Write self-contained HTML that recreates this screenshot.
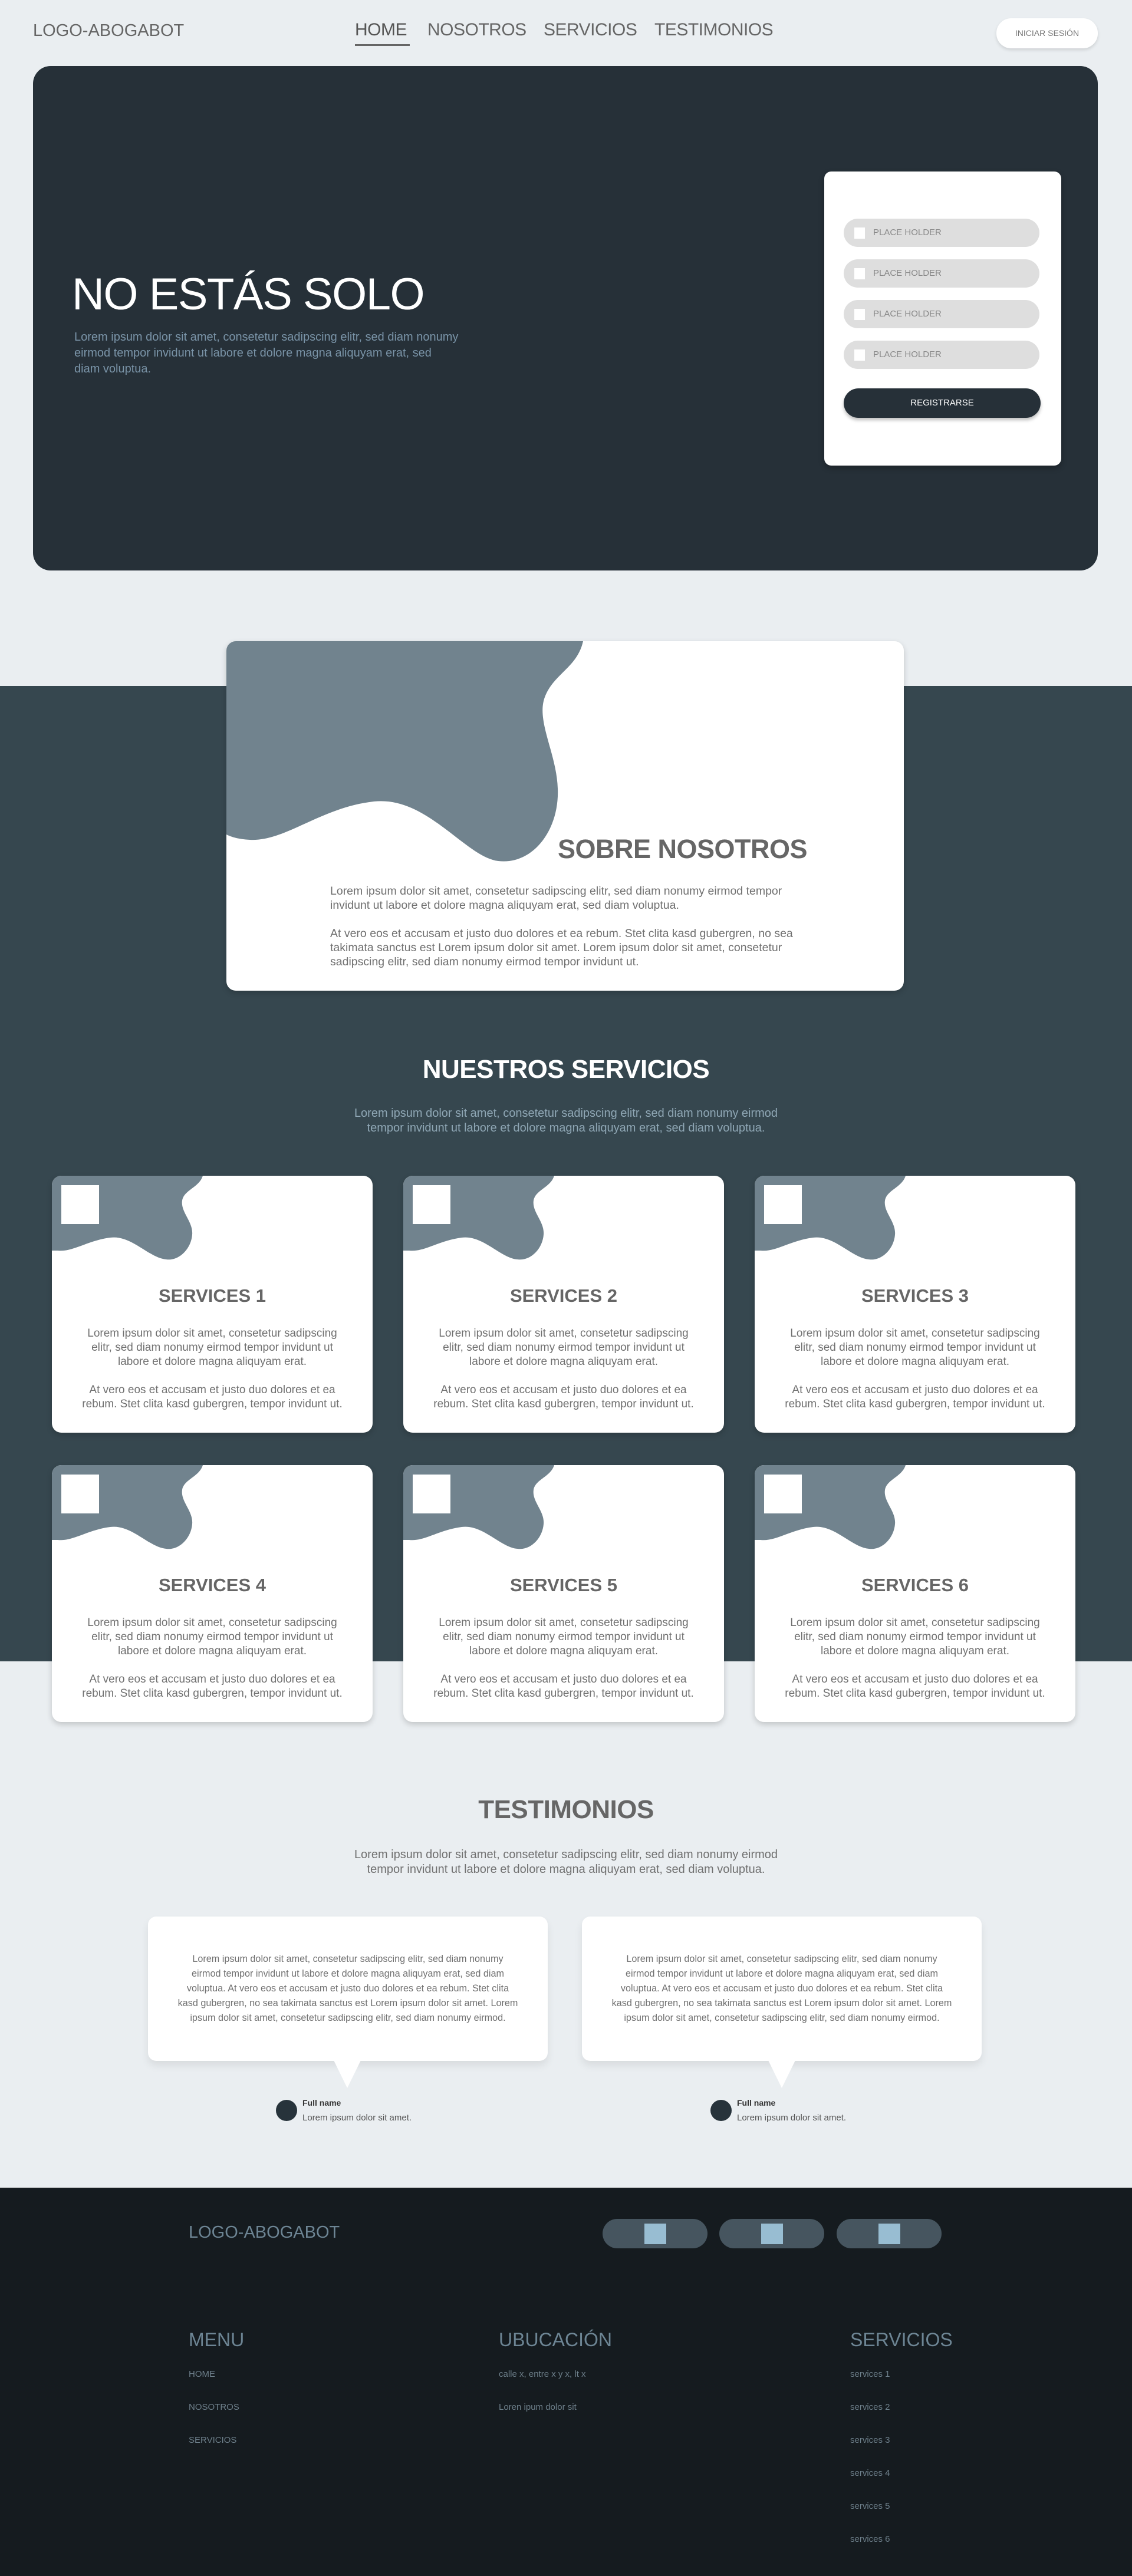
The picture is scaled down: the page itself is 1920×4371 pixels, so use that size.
<!DOCTYPE html>
<html><head><meta charset="utf-8"><style>
*{margin:0;padding:0;box-sizing:border-box}
body{width:1920px;height:4371px;background:#eaeef1;font-family:"Liberation Sans",sans-serif;position:relative;overflow:hidden}
.a{position:absolute}
.nav{font-size:30px;color:#666;top:34px;letter-spacing:-0.5px}
.card{background:#fff;border-radius:16px;overflow:hidden;box-shadow:0 4px 10px rgba(0,0,0,.18)}
.inp{left:33px;width:332px;height:48px;border-radius:24px;background:#dedede;font-size:15px;color:#888;line-height:48px;padding-left:50px}
.inp:before{content:"";position:absolute;left:18px;top:15px;width:18px;height:19px;background:#fff}
.svc .t{position:absolute;left:0;width:100%;top:186px;text-align:center;font-size:31px;font-weight:bold;color:#666}
.svc .p{position:absolute;left:0;width:100%;top:256px;text-align:center;font-size:19px;line-height:24px;color:#707070}
.tc{background:#fff;border-radius:14px;box-shadow:0 8px 14px rgba(0,0,0,.08);width:678px;height:245px;top:3252px}
.tc p{position:absolute;left:0;width:100%;top:60px;text-align:center;font-size:16.2px;line-height:25px;color:#707070}
.tail{top:3496px;width:0;height:0;border-left:23px solid transparent;border-right:23px solid transparent;border-top:47px solid #fff}
.av{top:3563px;width:36px;height:36px;border-radius:50%;background:#27333b}
.fn{font-size:14px;font-weight:bold;color:#333}
.fl{font-size:15px;color:#555}
.fh{top:3952px;font-size:32px;color:#6d8594}
.lk{font-size:15px;color:#6d7f8a}
.pill{top:3765px;width:178px;height:50px;border-radius:25px;background:#46555f}
.pill:after{content:"";position:absolute;left:71px;top:8px;width:37px;height:35px;background:#98bdd2}
</style></head><body>
<div class="a" style="left:56px;top:36px;font-size:29px;color:#666">LOGO-ABOGABOT</div>
<div class="a nav" style="left:602px;color:#555">HOME</div>
<div class="a" style="left:602px;top:75px;width:93px;height:3px;background:#666"></div>
<div class="a nav" style="left:725px">NOSOTROS</div>
<div class="a nav" style="left:922px">SERVICIOS</div>
<div class="a nav" style="left:1110px">TESTIMONIOS</div>
<div class="a" style="left:1690px;top:31px;width:172px;height:51px;border-radius:25px;background:#fff;box-shadow:0 3px 6px rgba(0,0,0,.12);font-size:14px;color:#777;text-align:center;line-height:51px">INICIAR SESIÓN</div>

<div class="a" style="left:56px;top:112px;width:1806px;height:856px;background:#263038;border-radius:30px"></div>
<div class="a" style="left:122px;top:456px;font-size:76px;color:#fff;letter-spacing:-1.5px;font-weight:300">NO ESTÁS SOLO</div>
<div class="a" style="left:126px;top:559px;width:720px;font-size:20px;line-height:27px;color:#7a94a8">Lorem ipsum dolor sit amet, consetetur sadipscing elitr, sed diam nonumy<br>eirmod tempor invidunt ut labore et dolore magna aliquyam erat, sed<br>diam voluptua.</div>
<div class="a" style="left:1398px;top:291px;width:402px;height:499px;background:#fff;border-radius:12px;box-shadow:0 4px 10px rgba(0,0,0,.3)">
 <div class="a inp" style="top:80px">PLACE HOLDER</div>
 <div class="a inp" style="top:149px">PLACE HOLDER</div>
 <div class="a inp" style="top:218px">PLACE HOLDER</div>
 <div class="a inp" style="top:287px">PLACE HOLDER</div>
 <div class="a" style="left:33px;top:368px;width:334px;height:50px;border-radius:25px;background:#263038;color:#fff;font-size:15px;text-align:center;line-height:50px;box-shadow:0 4px 6px rgba(0,0,0,.25)">REGISTRARSE</div>
</div>

<div class="a" style="left:0;top:1164px;width:1920px;height:1655px;background:#36474f"></div>
<div class="a card" style="left:384px;top:1088px;width:1149px;height:593px">
 <svg class="a" style="left:0;top:0" width="1149" height="593"><path d="M0,0 H605 C595,45 555,55 540,95 C525,135 560,190 562,250 C565,320 520,380 461,373 C405,366 340,262 250,272 C160,282 100,340 40,337 C20,336 8,332 0,328 Z" fill="#71838e"/></svg>
 <div class="a" style="left:562px;top:327px;font-size:45px;font-weight:bold;color:#666;letter-spacing:-0.5px">SOBRE NOSOTROS</div>
 <div class="a" style="left:176px;top:412px;width:900px;font-size:19.5px;line-height:24px;color:#707070">Lorem ipsum dolor sit amet, consetetur sadipscing elitr, sed diam nonumy eirmod tempor<br>invidunt ut labore et dolore magna aliquyam erat, sed diam voluptua.<br><br>At vero eos et accusam et justo duo dolores et ea rebum. Stet clita kasd gubergren, no sea<br>takimata sanctus est Lorem ipsum dolor sit amet. Lorem ipsum dolor sit amet, consetetur<br>sadipscing elitr, sed diam nonumy eirmod tempor invidunt ut.</div>
</div>
<div class="a" style="left:0;width:1920px;top:1790px;text-align:center;font-size:44px;font-weight:bold;color:#fff;letter-spacing:-0.5px">NUESTROS SERVICIOS</div>
<div class="a" style="left:0;width:1920px;top:1877px;text-align:center;font-size:20px;line-height:25px;color:#8fa7b5">Lorem ipsum dolor sit amet, consetetur sadipscing elitr, sed diam nonumy eirmod<br>tempor invidunt ut labore et dolore magna aliquyam erat, sed diam voluptua.</div>

<div class="a card svc" style="left:88px;top:1995px;width:544px;height:436px"><svg class="a" width="544" height="436"><path d="M0,0 H256 C250,20 224,24 221,42 C218,62 240,78 238,100 C236,125 215,145 194,142 C165,140 135,100 99,105 C60,110 35,130 10,127 L0,127 Z" fill="#71838e"/><rect x="16" y="16" width="64" height="66" fill="#fff"/></svg><div class="t">SERVICES 1</div><div class="p">Lorem ipsum dolor sit amet, consetetur sadipscing<br>elitr, sed diam nonumy eirmod tempor invidunt ut<br>labore et dolore magna aliquyam erat.<br><br>At vero eos et accusam et justo duo dolores et ea<br>rebum. Stet clita kasd gubergren, tempor invidunt ut.</div></div>
<div class="a card svc" style="left:684px;top:1995px;width:544px;height:436px"><svg class="a" width="544" height="436"><path d="M0,0 H256 C250,20 224,24 221,42 C218,62 240,78 238,100 C236,125 215,145 194,142 C165,140 135,100 99,105 C60,110 35,130 10,127 L0,127 Z" fill="#71838e"/><rect x="16" y="16" width="64" height="66" fill="#fff"/></svg><div class="t">SERVICES 2</div><div class="p">Lorem ipsum dolor sit amet, consetetur sadipscing<br>elitr, sed diam nonumy eirmod tempor invidunt ut<br>labore et dolore magna aliquyam erat.<br><br>At vero eos et accusam et justo duo dolores et ea<br>rebum. Stet clita kasd gubergren, tempor invidunt ut.</div></div>
<div class="a card svc" style="left:1280px;top:1995px;width:544px;height:436px"><svg class="a" width="544" height="436"><path d="M0,0 H256 C250,20 224,24 221,42 C218,62 240,78 238,100 C236,125 215,145 194,142 C165,140 135,100 99,105 C60,110 35,130 10,127 L0,127 Z" fill="#71838e"/><rect x="16" y="16" width="64" height="66" fill="#fff"/></svg><div class="t">SERVICES 3</div><div class="p">Lorem ipsum dolor sit amet, consetetur sadipscing<br>elitr, sed diam nonumy eirmod tempor invidunt ut<br>labore et dolore magna aliquyam erat.<br><br>At vero eos et accusam et justo duo dolores et ea<br>rebum. Stet clita kasd gubergren, tempor invidunt ut.</div></div>
<div class="a card svc" style="left:88px;top:2486px;width:544px;height:436px"><svg class="a" width="544" height="436"><path d="M0,0 H256 C250,20 224,24 221,42 C218,62 240,78 238,100 C236,125 215,145 194,142 C165,140 135,100 99,105 C60,110 35,130 10,127 L0,127 Z" fill="#71838e"/><rect x="16" y="16" width="64" height="66" fill="#fff"/></svg><div class="t">SERVICES 4</div><div class="p">Lorem ipsum dolor sit amet, consetetur sadipscing<br>elitr, sed diam nonumy eirmod tempor invidunt ut<br>labore et dolore magna aliquyam erat.<br><br>At vero eos et accusam et justo duo dolores et ea<br>rebum. Stet clita kasd gubergren, tempor invidunt ut.</div></div>
<div class="a card svc" style="left:684px;top:2486px;width:544px;height:436px"><svg class="a" width="544" height="436"><path d="M0,0 H256 C250,20 224,24 221,42 C218,62 240,78 238,100 C236,125 215,145 194,142 C165,140 135,100 99,105 C60,110 35,130 10,127 L0,127 Z" fill="#71838e"/><rect x="16" y="16" width="64" height="66" fill="#fff"/></svg><div class="t">SERVICES 5</div><div class="p">Lorem ipsum dolor sit amet, consetetur sadipscing<br>elitr, sed diam nonumy eirmod tempor invidunt ut<br>labore et dolore magna aliquyam erat.<br><br>At vero eos et accusam et justo duo dolores et ea<br>rebum. Stet clita kasd gubergren, tempor invidunt ut.</div></div>
<div class="a card svc" style="left:1280px;top:2486px;width:544px;height:436px"><svg class="a" width="544" height="436"><path d="M0,0 H256 C250,20 224,24 221,42 C218,62 240,78 238,100 C236,125 215,145 194,142 C165,140 135,100 99,105 C60,110 35,130 10,127 L0,127 Z" fill="#71838e"/><rect x="16" y="16" width="64" height="66" fill="#fff"/></svg><div class="t">SERVICES 6</div><div class="p">Lorem ipsum dolor sit amet, consetetur sadipscing<br>elitr, sed diam nonumy eirmod tempor invidunt ut<br>labore et dolore magna aliquyam erat.<br><br>At vero eos et accusam et justo duo dolores et ea<br>rebum. Stet clita kasd gubergren, tempor invidunt ut.</div></div>

<div class="a" style="left:0;width:1920px;top:3046px;text-align:center;font-size:44px;font-weight:bold;color:#666;letter-spacing:-0.5px">TESTIMONIOS</div>
<div class="a" style="left:0;width:1920px;top:3135px;text-align:center;font-size:20px;line-height:25px;color:#707070">Lorem ipsum dolor sit amet, consetetur sadipscing elitr, sed diam nonumy eirmod<br>tempor invidunt ut labore et dolore magna aliquyam erat, sed diam voluptua.</div>
<div class="a tc" style="left:251px"><p>Lorem ipsum dolor sit amet, consetetur sadipscing elitr, sed diam nonumy<br>eirmod tempor invidunt ut labore et dolore magna aliquyam erat, sed diam<br>voluptua. At vero eos et accusam et justo duo dolores et ea rebum. Stet clita<br>kasd gubergren, no sea takimata sanctus est Lorem ipsum dolor sit amet. Lorem<br>ipsum dolor sit amet, consetetur sadipscing elitr, sed diam nonumy eirmod.</p></div>
<div class="a tc" style="left:987px"><p>Lorem ipsum dolor sit amet, consetetur sadipscing elitr, sed diam nonumy<br>eirmod tempor invidunt ut labore et dolore magna aliquyam erat, sed diam<br>voluptua. At vero eos et accusam et justo duo dolores et ea rebum. Stet clita<br>kasd gubergren, no sea takimata sanctus est Lorem ipsum dolor sit amet. Lorem<br>ipsum dolor sit amet, consetetur sadipscing elitr, sed diam nonumy eirmod.</p></div>
<div class="a tail" style="left:566px"></div>
<div class="a tail" style="left:1303px"></div>
<div class="a av" style="left:468px"></div>
<div class="a fn" style="left:513px;top:3560px">Full name</div>
<div class="a fl" style="left:513px;top:3585px">Lorem ipsum dolor sit amet.</div>
<div class="a av" style="left:1205px"></div>
<div class="a fn" style="left:1250px;top:3560px">Full name</div>
<div class="a fl" style="left:1250px;top:3585px">Lorem ipsum dolor sit amet.</div>

<div class="a" style="left:0;top:3712px;width:1920px;height:659px;background:#151b1f;border-top:1px solid #555"></div>
<div class="a" style="left:320px;top:3772px;font-size:29px;color:#6d8594">LOGO-ABOGABOT</div>
<div class="a pill" style="left:1022px"></div>
<div class="a pill" style="left:1220px"></div>
<div class="a pill" style="left:1419px"></div>
<div class="a fh" style="left:320px">MENU</div>
<div class="a fh" style="left:846px">UBUCACIÓN</div>
<div class="a fh" style="left:1442px">SERVICIOS</div>
<div class="a lk" style="left:320px;top:4020px">HOME</div>
<div class="a lk" style="left:320px;top:4076px">NOSOTROS</div>
<div class="a lk" style="left:320px;top:4132px">SERVICIOS</div>
<div class="a lk" style="left:846px;top:4020px">calle x, entre x y x, lt x</div>
<div class="a lk" style="left:846px;top:4076px">Loren ipum dolor sit</div>
<div class="a lk" style="left:1442px;top:4020px">services 1</div>
<div class="a lk" style="left:1442px;top:4076px">services 2</div>
<div class="a lk" style="left:1442px;top:4132px">services 3</div>
<div class="a lk" style="left:1442px;top:4188px">services 4</div>
<div class="a lk" style="left:1442px;top:4244px">services 5</div>
<div class="a lk" style="left:1442px;top:4300px">services 6</div>
</body></html>
